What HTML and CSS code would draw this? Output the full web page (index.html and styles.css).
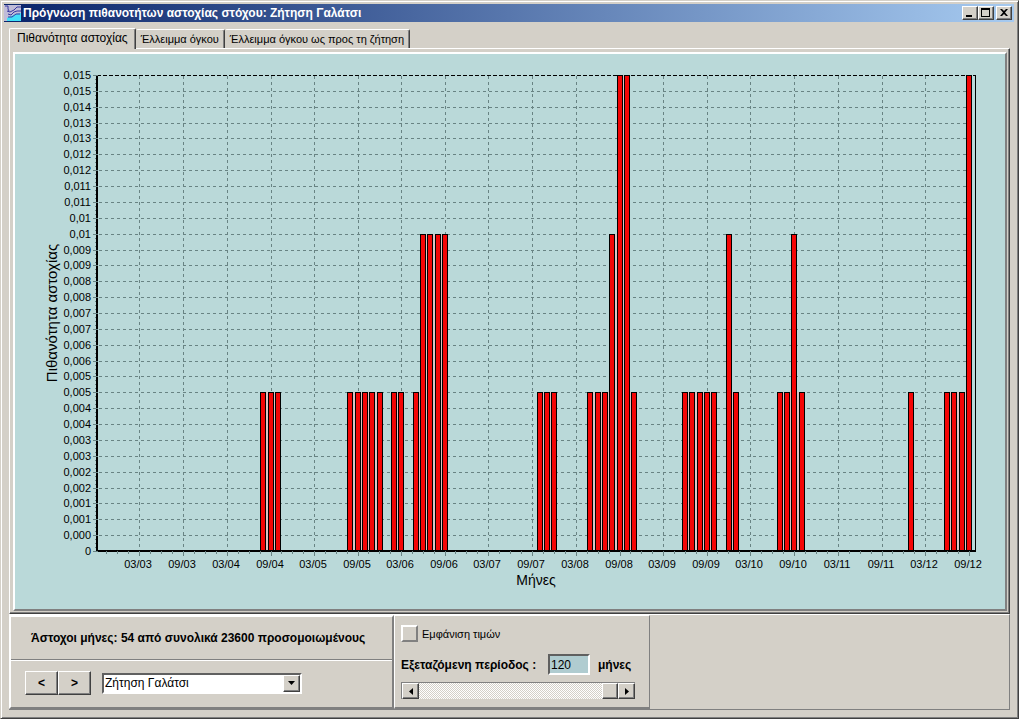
FILE: index.html
```html
<!DOCTYPE html>
<html lang="el">
<head>
<meta charset="utf-8">
<title>Πρόγνωση πιθανοτήτων αστοχίας</title>
<link rel="stylesheet" href="styles.css">
</head>
<body>
<main class="window">
  <header class="titlebar">
    <svg class="app-icon" viewBox="0 0 17 16" aria-hidden="true">
      <rect width="17" height="16" fill="#c0bcd8"/>
      <path d="M3 16V13L7 11L12 9L17 8V16Z" fill="#40e0f8"/>
      <path d="M1 1h3v3l1 2M3 6l3 1 4-2 3-3 4 0M4 9l3 1 3-3 3-1 4 0M4 12l4 0 4-3 4 0" fill="none" stroke="#3838a0"/>
    </svg>
    <h1 class="title">Πρόγνωση πιθανοτήτων αστοχίας στόχου: Ζήτηση Γαλάτσι</h1>
    <div class="window-buttons">
      <button class="win-btn" type="button" aria-label="Ελαχιστοποίηση"><svg viewBox="0 0 12 10"><path d="M2 7h6v2H2z"/></svg></button>
      <button class="win-btn" type="button" aria-label="Μεγιστοποίηση"><svg viewBox="0 0 12 10"><path fill-rule="evenodd" d="M1 0h9v9H1zM2 2v6h7V2z"/></svg></button>
      <button class="win-btn win-close" type="button" aria-label="Κλείσιμο"><svg viewBox="0 0 12 10"><path d="M2 1h2l2 2 2-2h2L7 4.500l3 3.500H8L6 6 4 8H2l3-3.500z"/></svg></button>
    </div>
  </header>

  <div class="tabs" role="tablist">
    <button class="tab tab-active" type="button" role="tab" aria-selected="true">Πιθανότητα αστοχίας</button>
    <button class="tab" type="button" role="tab" aria-selected="false">Έλλειμμα όγκου</button>
    <button class="tab" type="button" role="tab" aria-selected="false">Έλλειμμα όγκου ως προς τη ζήτηση</button>
  </div>

  <section class="page">
    <div class="chart-frame">
      <svg id="chart" class="chart" viewBox="15 54 990 555" role="img" aria-label="Πιθανότητα αστοχίας ανά μήνα"></svg>
    </div>
  </section>

  <section class="controls">
    <div class="left-panel">
      <p class="summary">Άστοχοι μήνες: 54 από συνολικά 23600 προσομοιωμένους</p>
      <div class="target-row">
        <div class="stepper">
          <button class="step" type="button" aria-label="Προηγούμενο">&lt;</button>
          <button class="step" type="button" aria-label="Επόμενο">&gt;</button>
        </div>
        <div class="combo">
          <select class="combo-select" aria-label="Στόχος"><option>Ζήτηση Γαλάτσι</option></select>
          <span class="combo-arrow" aria-hidden="true"><svg viewBox="0 0 7 4"><path d="M0 0h7L3.500 4z"/></svg></span>
        </div>
      </div>
    </div>
    <div class="right-panel">
      <label class="check"><input class="check-box" type="checkbox">Εμφάνιση τιμών</label>
      <div class="period">
        <label class="period-label" for="period">Εξεταζόμενη περίοδος :</label>
        <input class="period-input" id="period" type="text" value="120">
        <span>μήνες</span>
      </div>
      <div class="scrollbar">
        <button class="scroll-btn" type="button" aria-label="Μείωση"><svg viewBox="0 0 4 7"><path d="M4 0v7L0 3.500z"/></svg></button>
        <div class="scroll-track"><div class="scroll-thumb"></div></div>
        <button class="scroll-btn" type="button" aria-label="Αύξηση"><svg viewBox="0 0 4 7"><path d="M0 0v7l4-3.500z"/></svg></button>
      </div>
    </div>
  </section>
</main>
<script src="chart.js"></script>
</body>
</html>
```

FILE: styles.css
```css
* { box-sizing: border-box; }

body {
  margin: 0;
  background: #d4d0c8;
  color: #000;
  font: 12px "Liberation Sans", Arial, sans-serif;
}

button, input, select { font: inherit; color: inherit; border-radius: 0; }
svg { display: block; }

.window {
  display: flex;
  flex-direction: column;
  min-height: 100vh;
  padding: 3px 8px 8px 3px;
  border: 1px solid;
  border-color: #d4d0c8 #404040 #404040 #d4d0c8;
  box-shadow: inset 1px 1px #fff, inset -1px -1px #808080;
}

.titlebar {
  display: flex;
  align-items: center;
  gap: 2px;
  height: 18px;
  margin-right: -4px;
  padding-right: 2px;
  background: linear-gradient(90deg, #0a246a, #a6caf0);
  color: #fff;
}

.app-icon { width: 17px; height: 16px; }

.title {
  flex: 1;
  margin: 0;
  font-size: 12px;
  line-height: 18px;
  white-space: nowrap;
}

.window-buttons { display: flex; }

.win-btn, .step, .scroll-btn, .combo-arrow, .scroll-thumb {
  display: flex;
  align-items: center;
  justify-content: center;
  padding: 0;
  background: #d4d0c8;
  border: 1px solid;
  border-color: #fff #404040 #404040 #fff;
  box-shadow: inset -1px -1px #808080;
}

.win-btn { width: 16px; height: 14px; }
.win-btn svg { width: 12px; height: 10px; }
.win-close { margin-left: 2px; }

.tabs {
  display: flex;
  align-items: flex-end;
  height: 26px;
  padding-left: 5px;
}

.tab {
  height: 19px;
  padding: 0 5px 0 4px;
  background: #d4d0c8;
  border: 1px solid;
  border-color: #fff #404040 transparent #d4d0c8;
  border-bottom: 0;
  border-radius: 2px 2px 0 0;
  box-shadow: inset -1px 0 #808080;
  font-size: 11px;
  white-space: nowrap;
}

.tab-active {
  position: relative;
  height: 21px;
  margin-bottom: -1px;
  padding: 0 7px 3px;
  border-left-color: #fff;
  font-size: 12px;
}

.page {
  margin-left: 5px;
  padding: 3px 2px 2px 3px;
  border: 1px solid;
  border-color: #fff #404040 #404040 #fff;
  box-shadow: inset -1px -1px #808080;
}

.chart-frame {
  border: 2px solid;
  border-color: #fff #808080 #808080 #fff;
  background: #bad9d9;
}

.chart { width: 100%; height: auto; shape-rendering: crispEdges; }
.grid { stroke: #688383; stroke-dasharray: 3 3; }
.frame { stroke: #000; }
.frame-top { stroke: #000; stroke-dasharray: 4 2; }
.axis { stroke: #000; stroke-width: 2; }
.tick { stroke: #688383; }
.bar { fill: #f40606; stroke: #000; }
.gap { fill: #dcc4c4; }
.value-label { font-size: 11px; text-anchor: end; }
.month-label { font-size: 11px; text-anchor: middle; }
.axis-title { font-size: 14px; text-anchor: middle; }
.axis-title-value { font-size: 15px; }

.controls {
  display: flex;
  flex: 1;
  margin-left: 5px;
  border-top: 1px solid #fff;
  border-right: 1px solid #808080;
  border-bottom: 1px solid #808080;
}

.left-panel {
  display: flex;
  flex-direction: column;
  width: 385px;
  border: solid;
  border-width: 2px;
  border-color: #fff #808080 #808080 #fff;
}

.summary {
  margin: 0;
  padding: 0 20px;
  border-bottom: 1px solid #808080;
  font-weight: bold;
  line-height: 42px;
  white-space: nowrap;
}

.target-row {
  display: flex;
  flex: 1;
  align-items: center;
  gap: 11px;
  padding: 0 14px 2px;
  border-top: 1px solid #fff;
}

.stepper { display: flex; }
.step { width: 33px; height: 24px; font-weight: bold; }

.combo {
  display: grid;
  grid-template-columns: 1fr 17px;
  width: 200px;
  height: 21px;
  border: 2px solid;
  border-color: #606060 #fff #fff #606060;
  background: #fff;
}

.combo-select {
  grid-area: 1 / 1 / 2 / 3;
  padding: 0 1px;
  border: 0;
  background: #fff;
  appearance: none;
}

.combo-arrow { grid-area: 1 / 2; pointer-events: none; z-index: 1; }
.combo-arrow svg { width: 7px; height: 4px; }

.right-panel {
  display: flex;
  flex-direction: column;
  width: 256px;
  padding: 9px 14px 8px 6px;
  border: 1px solid;
  border-color: #fff #808080 #808080 #fff;
  border-bottom-width: 2px;
}

.check { display: flex; align-items: center; gap: 4px; font-size: 11px; }

.check-box {
  width: 17px;
  height: 17px;
  margin: 0;
  appearance: none;
  border: 2px solid;
  border-color: #fff #808080 #808080 #fff;
}

.period {
  display: flex;
  align-items: center;
  gap: 8px;
  margin-top: 12px;
  font-weight: bold;
  white-space: nowrap;
}

.period-label { min-width: 139px; }

.period-input {
  width: 42px;
  height: 21px;
  padding: 0 1px;
  border: 2px solid;
  border-color: #606060 #fff #fff #606060;
  background: #b0ccd0;
  font-weight: normal;
}

.scrollbar {
  display: flex;
  height: 17px;
  margin-top: 7px;
  border-top: 1px solid #808080;
  border-left: 1px solid #808080;
}

.scroll-btn { width: 17px; height: 16px; }
.scroll-btn svg { width: 4px; height: 7px; }

.scroll-track {
  display: flex;
  flex: 1;
  justify-content: flex-end;
  background: repeating-conic-gradient(#fff 0 25%, #d4d0c8 0 50%) 0 0 / 2px 2px;
}

.scroll-thumb { width: 16px; height: 16px; }
```

FILE: chart.js
```javascript
const chart = document.getElementById("chart");
const LEFT = 97, RIGHT = 975, TOP = 75, BOTTOM = 551;
const FIRST_MARCH = 139.6, DAY = 0.23906;

const valueLabels = [
  "0,015", "0,015", "0,014", "0,013", "0,013", "0,012", "0,012", "0,011",
  "0,011", "0,01", "0,01", "0,009", "0,009", "0,008", "0,008", "0,007",
  "0,007", "0,006", "0,006", "0,005", "0,005", "0,004", "0,004", "0,003",
  "0,003", "0,002", "0,002", "0,001", "0,001", "0,000", "0"
];

// Month offset from March 2003, and height in steps of 0.005.
const bars = [
  [17, 1], [18, 1], [19, 1],
  [29, 1], [30, 1], [31, 1], [32, 1], [33, 1], [35, 1], [36, 1],
  [38, 1], [39, 2], [40, 2], [41, 2], [42, 2],
  [55, 1], [56, 1], [57, 1],
  [62, 1], [63, 1], [64, 1], [65, 2], [66, 3], [67, 3], [68, 1],
  [75, 1], [76, 1], [77, 1], [78, 1], [79, 1], [81, 2], [82, 1],
  [88, 1], [89, 1], [90, 2], [91, 1],
  [106, 1], [111, 1], [112, 1], [113, 1], [114, 3]
];

function add(name, attributes, text) {
  const node = document.createElementNS("http://www.w3.org/2000/svg", name);
  for (const key in attributes) node.setAttribute(key, attributes[key]);
  if (text) node.textContent = text;
  chart.appendChild(node);
}

function line(x1, y1, x2, y2, cls) {
  add("line", { x1, y1, x2, y2, class: cls });
}

function monthX(offset) {
  const days = (Date.UTC(2003, 2 + offset, 1) - Date.UTC(2003, 2, 1)) / 86400000;
  return Math.floor(FIRST_MARCH + days * DAY);
}

const rowHeight = (BOTTOM - TOP) / (valueLabels.length - 1);

valueLabels.forEach((label, i) => {
  const y = Math.round(TOP + i * rowHeight);
  if (i > 0 && y < BOTTOM) line(LEFT + 2, y + 0.5, RIGHT, y + 0.5, "grid");
  add("text", { x: 91, y: y + 4, class: "value-label" }, label);
});

for (let i = 0; i < 20; i++) {
  const x = monthX(i * 6);
  const month = i % 2 ? "09" : "03";
  const year = String(3 + Math.floor(i / 2)).padStart(2, "0");
  line(x + 0.5, TOP + 1, x + 0.5, BOTTOM, "grid");
  add("text", { x: x - 1, y: 568, class: "month-label" }, month + "/" + year);
}

line(LEFT, TOP + 0.5, RIGHT, TOP + 0.5, "frame-top");
line(RIGHT + 0.5, TOP, RIGHT + 0.5, BOTTOM, "frame");

bars.forEach(([offset, level], i) => {
  const x = monthX(offset) - 3;
  const y = Math.round(BOTTOM - level * 10 * rowHeight);
  const next = bars[i + 1];
  if (next && next[0] === offset + 1) {
    const gapY = Math.round(BOTTOM - Math.min(level, next[1]) * 10 * rowHeight);
    add("rect", { x: x + 6, y: gapY, width: 2, height: BOTTOM - gapY, class: "gap" });
  }
  add("rect", { x: x + 0.5, y: y + 0.5, width: 5, height: BOTTOM - y, class: "bar" });
});

line(LEFT, TOP, LEFT, BOTTOM + 1, "axis");
line(LEFT - 1, BOTTOM, RIGHT + 1, BOTTOM, "axis");

valueLabels.forEach((label, i) => {
  const y = Math.round(TOP + i * rowHeight) + 0.5;
  line(LEFT - 4, y, LEFT + 1, y, "tick");
  for (let k = 1; k < 4 && i < valueLabels.length - 1; k++) {
    const minor = Math.floor(y + k * rowHeight / 4) + 0.5;
    line(LEFT - 2, minor, LEFT - 1, minor, "tick");
  }
});

for (let i = -1; i < 20; i++) {
  const start = monthX(i * 6);
  const step = (monthX(i * 6 + 6) - start) / 4;
  for (let k = 0; k < 4; k++) {
    const x = Math.floor(start + k * step) + 0.5;
    if (x > LEFT + 1 && x < RIGHT) line(x, BOTTOM, x, BOTTOM + (k ? 3 : 5), "tick");
  }
}

add("text", { x: 536, y: 585, class: "axis-title" }, "Μήνες");
add("text", { transform: "translate(57 313) rotate(-90)", class: "axis-title axis-title-value" }, "Πιθανότητα αστοχίας");
```
